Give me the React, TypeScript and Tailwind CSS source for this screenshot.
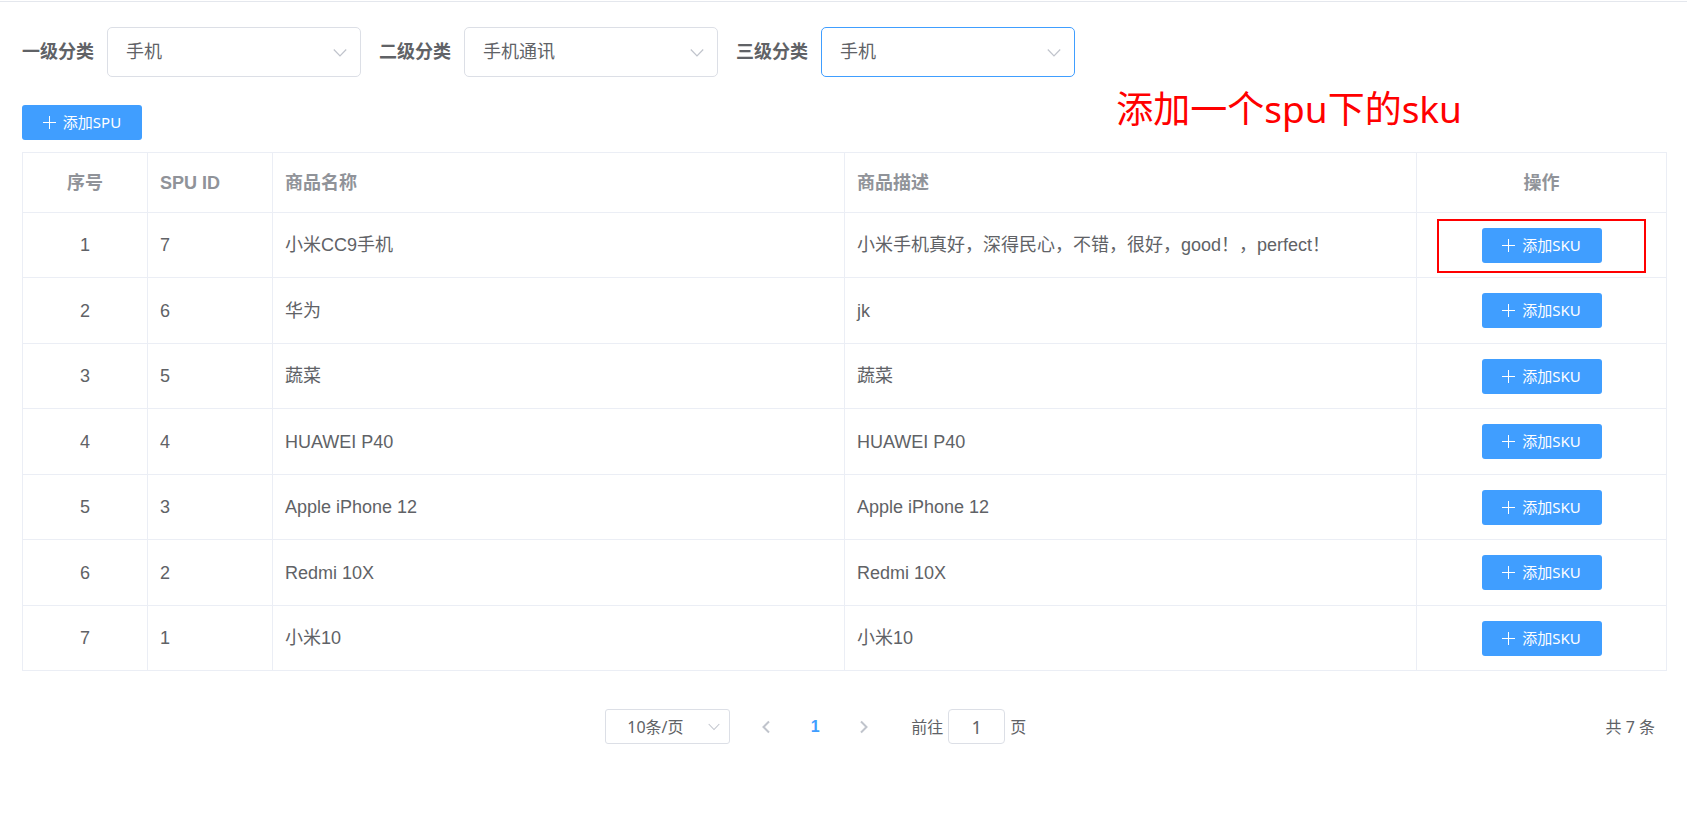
import { useState } from "react";

type Spu = { id: number; name: string; description: string };

const spuList: Spu[] = [
  { id: 7, name: "小米CC9手机", description: "小米手机真好，深得民心，不错，很好，good！，perfect！" },
  { id: 6, name: "华为", description: "jk" },
  { id: 5, name: "蔬菜", description: "蔬菜" },
  { id: 4, name: "HUAWEI P40", description: "HUAWEI P40" },
  { id: 3, name: "Apple iPhone 12", description: "Apple iPhone 12" },
  { id: 2, name: "Redmi 10X", description: "Redmi 10X" },
  { id: 1, name: "小米10", description: "小米10" },
];

const categories = [
  { id: "category1", label: "一级分类", value: "手机", active: false },
  { id: "category2", label: "二级分类", value: "手机通讯", active: false },
  { id: "category3", label: "三级分类", value: "手机", active: true },
];

function ChevronDown({ className }: { className: string }) {
  return (
    <svg viewBox="0 0 14 14" fill="none" stroke="#c0c4cc" strokeWidth="1.2" className={className} aria-hidden="true">
      <path d="M0.8 3.5 L7 10 L13.2 3.5" />
    </svg>
  );
}

function AddButton({ label }: { label: string }) {
  return (
    <button
      type="button"
      className="inline-flex h-[35px] w-[120px] items-center justify-center gap-[7px] rounded-[3px] bg-[#409eff] font-['Noto_Sans','Noto_Sans_CJK_SC',sans-serif] text-[15px] leading-none font-normal text-white"
    >
      <svg viewBox="0 0 13 13" stroke="currentColor" strokeWidth="1" className="size-[13px]" aria-hidden="true">
        <path d="M0 6.5 H13 M6.5 0 V13" />
      </svg>
      <span>{label}</span>
    </button>
  );
}

function CategoryField({ id, label, value, active }: (typeof categories)[number]) {
  return (
    <div className="flex items-center gap-[13px]">
      <label htmlFor={id} className="text-[18px] font-bold">
        {label}
      </label>
      <div className="relative">
        <select
          id={id}
          className={
            active
              ? "h-[50px] w-[254px] appearance-none rounded-[5px] border border-[#409eff] bg-white pl-[18px] text-[18px] outline-none"
              : "h-[50px] w-[254px] appearance-none rounded-[5px] border border-[#dcdfe6] bg-white pl-[18px] text-[18px] outline-none"
          }
        >
          <option>{value}</option>
        </select>
        <ChevronDown className="pointer-events-none absolute top-[19px] right-[14px] size-[14px]" />
      </div>
    </div>
  );
}

function Pagination({ total }: { total: number }) {
  const [page, setPage] = useState("1");
  return (
    <nav className="mt-[38px] flex items-center pr-3 pl-1 font-['Noto_Sans','Noto_Sans_CJK_SC',sans-serif] text-[16px]">
      <div className="flex flex-1 items-center justify-center">
        <div className="relative">
          <select
            aria-label="每页条数"
            className="h-[35px] w-[125px] appearance-none rounded-[3px] border border-[#dcdfe6] bg-white pl-[21px] outline-none"
          >
            <option>10条/页</option>
          </select>
          <ChevronDown className="pointer-events-none absolute top-[12px] right-[10px] size-[12px]" />
        </div>
        <button type="button" aria-label="上一页" className="ml-[25px] p-1">
          <svg viewBox="0 0 14 14" fill="none" stroke="#c0c4cc" strokeWidth="2" className="size-[14px]" aria-hidden="true">
            <path d="M10 1.5 L4.5 7 L10 12.5" />
          </svg>
        </button>
        <button
          type="button"
          aria-current="page"
          className="mx-[19px] w-[38px] font-['Liberation_Sans',sans-serif] font-bold text-[#409eff]"
        >
          1
        </button>
        <button type="button" aria-label="下一页" className="p-1">
          <svg viewBox="0 0 14 14" fill="none" stroke="#c0c4cc" strokeWidth="2" className="size-[14px]" aria-hidden="true">
            <path d="M4 1.5 L9.5 7 L4 12.5" />
          </svg>
        </button>
        <label htmlFor="jumper" className="ml-[36px]">
          前往
        </label>
        <input
          id="jumper"
          value={page}
          onChange={(event) => setPage(event.target.value)}
          className="mx-[5px] h-[35px] w-[57px] rounded-[4px] border border-[#dcdfe6] text-center text-[18px] outline-none"
        />
        <span>页</span>
      </div>
      <span>共 {total} 条</span>
    </nav>
  );
}

export default function App() {
  return (
    <div className="bg-white pt-px font-['Liberation_Sans','Noto_Sans_CJK_SC',sans-serif] text-[#606266]">
      <main className="relative border-t border-[#e4e7ed] pt-[25px] pr-5 pl-[22px]">
        <form className="flex gap-[18px]">
          {categories.map((category) => (
            <CategoryField key={category.id} {...category} />
          ))}
        </form>

        <p className="absolute top-[81px] right-[225px] font-['Noto_Sans','Noto_Sans_CJK_SC',sans-serif] text-[37px] leading-[52px] text-[#ff0000]">
          添加一个spu下的sku
        </p>

        <div className="mt-[28px] flex">
          <AddButton label="添加SPU" />
        </div>

        <table className="mt-3 w-full table-fixed border-separate border-spacing-0 border-t border-l border-[#ebeef5] text-left text-[18px] leading-6">
          <colgroup>
            <col className="w-[125px]" />
            <col className="w-[125px]" />
            <col />
            <col />
            <col className="w-[250px]" />
          </colgroup>
          <thead>
            <tr className="h-[60px] text-[#909399]">
              <th className="border-r border-b border-[#ebeef5] px-3 text-center">序号</th>
              <th className="border-r border-b border-[#ebeef5] px-3">SPU ID</th>
              <th className="border-r border-b border-[#ebeef5] px-3">商品名称</th>
              <th className="border-r border-b border-[#ebeef5] px-3">商品描述</th>
              <th className="border-r border-b border-[#ebeef5] px-3 text-center">操作</th>
            </tr>
          </thead>
          <tbody>
            {spuList.map((spu, index) => (
              <tr key={spu.id} className="odd:h-[65px] even:h-[66px]">
                <td className="border-r border-b border-[#ebeef5] px-3 text-center">{index + 1}</td>
                <td className="border-r border-b border-[#ebeef5] px-3">{spu.id}</td>
                <td className="border-r border-b border-[#ebeef5] px-3">{spu.name}</td>
                <td className="border-r border-b border-[#ebeef5] px-3">{spu.description}</td>
                <td className="relative border-r border-b border-[#ebeef5] px-3 text-center">
                  <div className="flex justify-center">
                    <AddButton label="添加SKU" />
                  </div>
                  {index === 0 && (
                    <div className="pointer-events-none absolute inset-x-5 top-[6px] bottom-[4px] border-2 border-[#ff0000]" />
                  )}
                </td>
              </tr>
            ))}
          </tbody>
        </table>

        <Pagination total={spuList.length} />
      </main>
    </div>
  );
}
